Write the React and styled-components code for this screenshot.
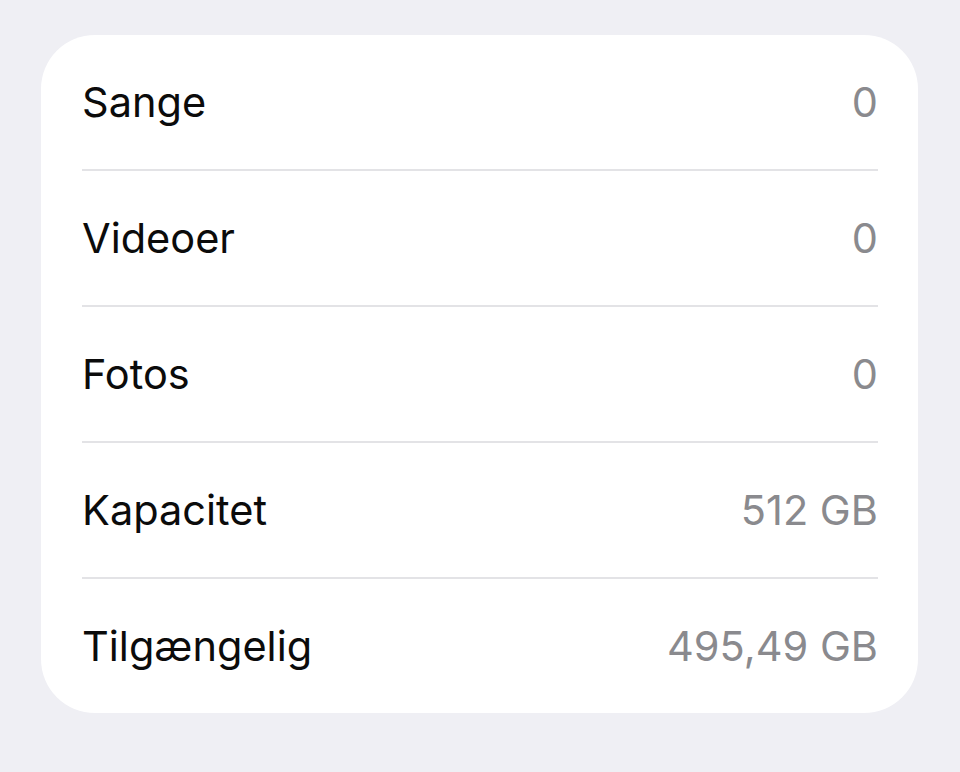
import React from 'react'
import styled, { createGlobalStyle } from 'styled-components'

const GlobalStyle = createGlobalStyle`
  html, body {
    margin: 0;
    background: #efeff4;
    font-family: Inter, 'Liberation Sans', Arial, sans-serif;
    -webkit-font-smoothing: antialiased;
  }
`

const Page = styled.div`
  padding: 35px 42px 59px 41px;
`

const Card = styled.ul`
  list-style: none;
  margin: 0;
  padding: 0 40px 0 41px;
  background: #fff;
  border-radius: 54px;
`

const Row = styled.li`
  display: flex;
  align-items: center;
  justify-content: space-between;
  height: 134px;
  font-size: 41.5px;
  & + & {
    border-top: 2px solid #e3e3e6;
  }
`

const Label = styled.span`
  color: #0b0b0b;
`

const Value = styled.span`
  color: #8a8a8e;
`

const rows = [
  ['Sange', '0'],
  ['Videoer', '0'],
  ['Fotos', '0'],
  ['Kapacitet', '512 GB'],
  ['Tilgængelig', '495,49 GB'],
]

export default function App() {
  return (
    <>
      <GlobalStyle />
      <Page>
        <Card>
          {rows.map(([label, value]) => (
            <Row key={label}>
              <Label>{label}</Label>
              <Value>{value}</Value>
            </Row>
          ))}
        </Card>
      </Page>
    </>
  )
}
